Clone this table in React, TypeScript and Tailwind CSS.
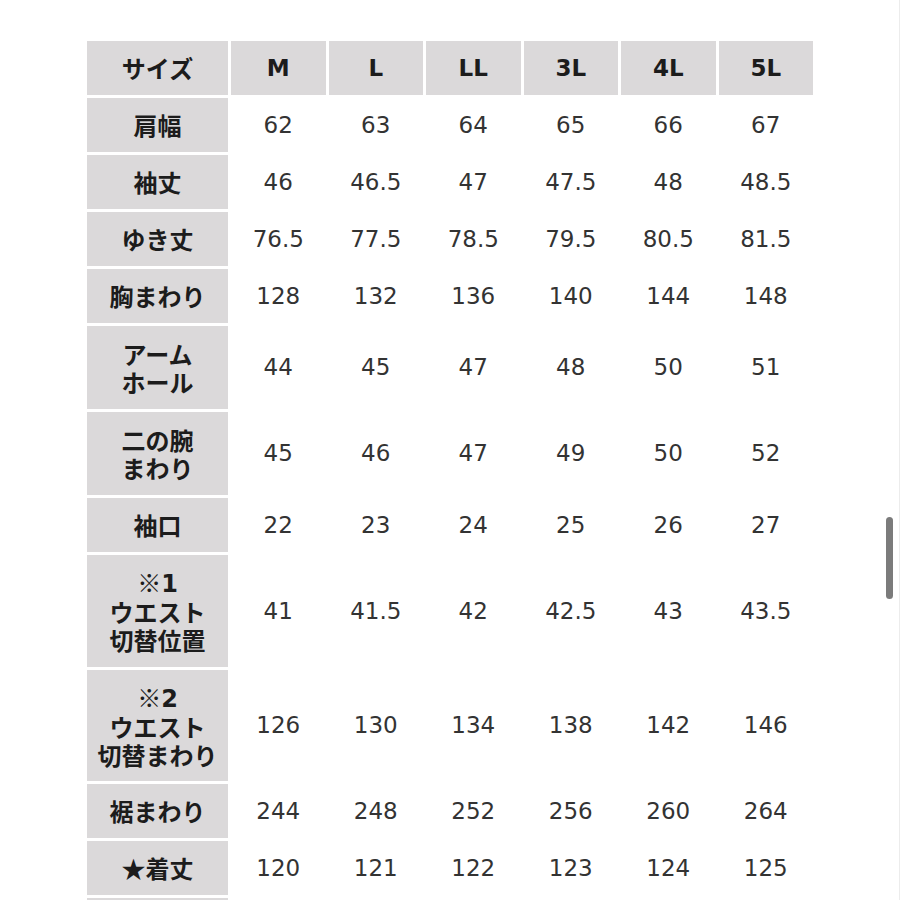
import React from "react"

type Row = {
  label: string[]
  values: string[]
  height: string
}

const sizes = ["M", "L", "LL", "3L", "4L", "5L"]

const rows: Row[] = [
  { label: ["肩幅"], values: ["62", "63", "64", "65", "66", "67"], height: "h-[54px]" },
  { label: ["袖丈"], values: ["46", "46.5", "47", "47.5", "48", "48.5"], height: "h-[54px]" },
  { label: ["ゆき丈"], values: ["76.5", "77.5", "78.5", "79.5", "80.5", "81.5"], height: "h-[54px]" },
  { label: ["胸まわり"], values: ["128", "132", "136", "140", "144", "148"], height: "h-[54px]" },
  { label: ["アーム", "ホール"], values: ["44", "45", "47", "48", "50", "51"], height: "h-[83px]" },
  { label: ["二の腕", "まわり"], values: ["45", "46", "47", "49", "50", "52"], height: "h-[83px]" },
  { label: ["袖口"], values: ["22", "23", "24", "25", "26", "27"], height: "h-[54px]" },
  { label: ["※1", "ウエスト", "切替位置"], values: ["41", "41.5", "42", "42.5", "43", "43.5"], height: "h-[112px]" },
  { label: ["※2", "ウエスト", "切替まわり"], values: ["126", "130", "134", "138", "142", "146"], height: "h-[111px]" },
  { label: ["裾まわり"], values: ["244", "248", "252", "256", "260", "264"], height: "h-[54px]" },
  { label: ["★着丈"], values: ["120", "121", "122", "123", "124", "125"], height: "h-[54px]" },
]

const labelFont = "font-['Noto_Sans_CJK_JP',sans-serif]"
const numFont = "font-['DejaVu_Sans','Noto_Sans_CJK_JP',sans-serif]"

function LabelCell({ lines, height }: { lines: string[]; height: string }) {
  return (
    <div
      className={`${height} bg-[#dbd9da] flex flex-col items-center justify-center text-[24px] leading-[28px] font-bold text-[#1c1c1c] ${labelFont}`}
    >
      {lines.map((line) => (
        <div key={line} className="whitespace-nowrap">
          {line.startsWith("※") ? (
            <>
              <span>※</span>
              <span className={numFont}>{line.slice(1)}</span>
            </>
          ) : (
            line
          )}
        </div>
      ))}
    </div>
  )
}

export default function App() {
  return (
    <div className="relative w-[900px] h-[900px] overflow-hidden bg-white border-r border-[#ececec]">
      <div className="pt-[41px] pl-[87px]">
        <div className="grid grid-cols-[141px_repeat(6,94.5px)] gap-[3px]">
          {/* Header */}
          <LabelCell lines={["サイズ"]} height="h-[54px]" />
          {sizes.map((s) => (
            <div
              key={s}
              className={`h-[54px] bg-[#dbd9da] flex items-center justify-center text-[23px] font-bold text-[#1c1c1c] ${numFont}`}
            >
              {s}
            </div>
          ))}

          {/* Body */}
          {rows.map((row) => (
            <React.Fragment key={row.label.join("")}>
              <LabelCell lines={row.label} height={row.height} />
              {row.values.map((v, i) => (
                <div
                  key={i}
                  className={`${row.height} bg-white flex items-center justify-center text-[23px] text-[#333333] ${numFont}`}
                >
                  {v}
                </div>
              ))}
            </React.Fragment>
          ))}

          {/* next row, cut off by the viewport */}
          <div className="h-[54px] bg-[#dbd9da]" />
        </div>
      </div>

      {/* overlay scrollbar thumb */}
      <div className="absolute left-[886px] top-[517px] w-[7px] h-[82px] rounded-full bg-[#7b7b7b]" />
    </div>
  )
}
